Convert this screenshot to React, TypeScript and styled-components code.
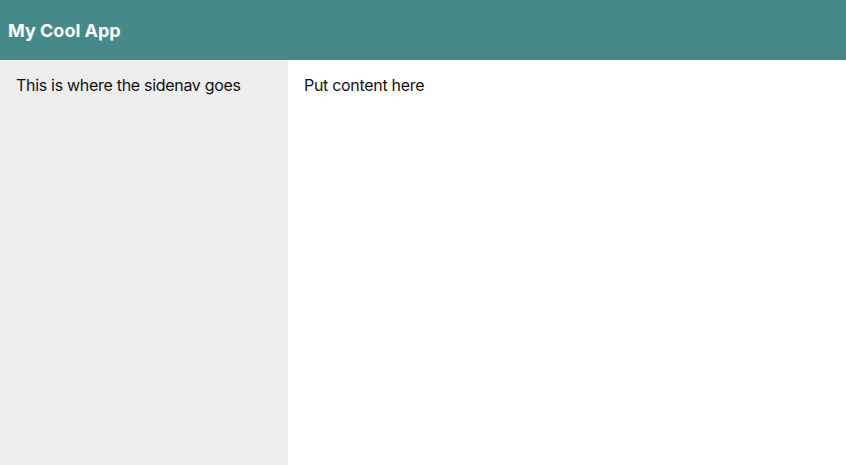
import styled, { createGlobalStyle } from "styled-components";

const GlobalStyle = createGlobalStyle`
  html, body, #root {
    margin: 0;
    height: 100%;
  }
  body {
    font-family: Inter, "Noto Sans", sans-serif;
    color: #111;
  }
`;

const Layout = styled.div`
  display: flex;
  flex-direction: column;
  height: 100vh;
`;

const Header = styled.header`
  height: 60px;
  flex-shrink: 0;
  display: flex;
  align-items: center;
  padding: 0 8px;
  background: #458a89;
`;

const Title = styled.h1`
  margin: 0;
  font-size: 18px;
  font-weight: 700;
  color: #fff;
`;

const Body = styled.div`
  display: flex;
  flex: 1;
`;

const Sidenav = styled.nav`
  width: 288px;
  flex-shrink: 0;
  box-sizing: border-box;
  padding: 15px 16px;
  background: #eeeeee;
  font-size: 16px;
  letter-spacing: -0.3px;
`;

const Content = styled.main`
  flex: 1;
  padding: 15px 16px;
  font-size: 16px;
  letter-spacing: -0.3px;
`;

export default function App() {
  return (
    <>
      <GlobalStyle />
      <Layout>
        <Header>
          <Title>My Cool App</Title>
        </Header>
        <Body>
          <Sidenav>This is where the sidenav goes</Sidenav>
          <Content>Put content here</Content>
        </Body>
      </Layout>
    </>
  );
}
